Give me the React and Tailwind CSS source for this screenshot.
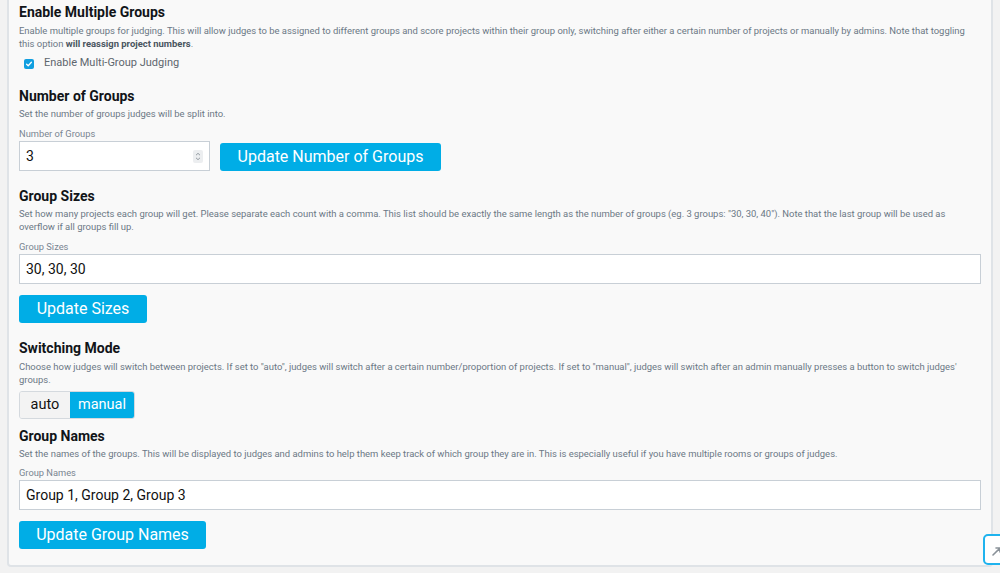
import React from "react";

const font = { fontFamily: "Roboto, 'Open Sans', sans-serif" };

function Heading({ children, className = "" }) {
  return (
    <h2 className={"text-[14px] leading-[18px] font-bold text-[#111418] " + className}>
      {children}
    </h2>
  );
}

function Desc({ children, className = "" }) {
  return (
    <p className={"text-[9.45px] leading-[13px] text-[#6b7885] " + className}>{children}</p>
  );
}

function Label({ children, className = "mt-[7px]" }) {
  return <div className={"text-[9.3px] leading-[13px] text-[#7a8591] " + className}>{children}</div>;
}

function Button({ children, className = "" }) {
  return (
    <button className={"h-[28px] rounded-[3px] bg-[#00ade6] px-[17px] text-[16px] leading-[28px] text-white " + className}>
      {children}
    </button>
  );
}

function TextInput({ value }) {
  return (
    <div className="mt-[1.5px] flex h-[30px] w-full items-center border border-[#c8cfd6] bg-white px-[6px] text-[14px] text-[#111]">
      {value}
    </div>
  );
}

export default function App() {
  return (
    <div className="relative h-[573px] w-full overflow-hidden bg-[#f2f2f2]" style={font}>
      <div className="ml-[7px] w-[986px] rounded-b-[4px] border-x-2 border-b-2 border-[#dfe3e7] bg-[#f9f9f9] pb-[16px] pl-[10px] pr-[10px] pt-[3px]">
        {/* Enable Multiple Groups */}
        <Heading>Enable Multiple Groups</Heading>
        <Desc className="mt-[2.5px]">
          <span className="whitespace-nowrap">Enable multiple groups for judging. This will allow judges to be assigned to different groups and score projects within their group only, switching after either a certain number of projects or manually by admins. Note that toggling</span>
          <br />
          this option <b className="font-bold text-[#4a5560]">will reassign project numbers</b>.
        </Desc>
        <label className="mt-[6px] flex h-[16px] items-center pl-[5px]">
          <span className="flex h-[10px] w-[10px] items-center justify-center rounded-[2px] bg-[#119fe0]">
            <svg width="8" height="8" viewBox="0 0 8 8">
              <path d="M1.6 4.2 L3.2 5.7 L6.4 2.3" fill="none" stroke="white" strokeWidth="1.3" strokeLinecap="round" strokeLinejoin="round" />
            </svg>
          </span>
          <span className="ml-[10px] text-[11px] text-[#5e666e]">Enable Multi-Group Judging</span>
        </label>

        {/* Number of Groups */}
        <Heading className="mt-[15.5px]">Number of Groups</Heading>
        <Desc className="mt-[1.5px]">Set the number of groups judges will be split into.</Desc>
        <Label>Number of Groups</Label>
        <div className="mt-[1.5px] flex items-end gap-[10px]">
          <div className="flex h-[30px] w-[191px] items-center justify-between border border-[#c8cfd6] bg-white pl-[6px] pr-[6px] text-[14px] text-[#111]">
            <span>3</span>
            <span className="flex h-[13px] w-[10px] items-center justify-center rounded-[2px] bg-[#eceef0]">
              <svg width="6" height="9" viewBox="0 0 6 9">
                <path d="M1 3.2 L3 1.3 L5 3.2 M1 5.8 L3 7.7 L5 5.8" fill="none" stroke="#8a9299" strokeWidth="0.9" />
              </svg>
            </span>
          </div>
          <Button className="w-[221px] h-[27px] leading-[27px]">Update Number of Groups</Button>
        </div>

        {/* Group Sizes */}
        <Heading className="mt-[16px]">Group Sizes</Heading>
        <Desc className="mt-[1.5px]">
          <span className="whitespace-nowrap">Set how many projects each group will get. Please separate each count with a comma. This list should be exactly the same length as the number of groups (eg. 3 groups: "30, 30, 40"). Note that the last group will be used as</span>
          <br />
          overflow if all groups fill up.
        </Desc>
        <Label>Group Sizes</Label>
        <TextInput value="30, 30, 30" />
        <Button className="mt-[11px] w-[128px]">Update Sizes</Button>

        {/* Switching Mode */}
        <Heading className="mt-[16px]">Switching Mode</Heading>
        <Desc className="mt-[2.5px]">
          <span className="whitespace-nowrap">Choose how judges will switch between projects. If set to "auto", judges will switch after a certain number/proportion of projects. If set to "manual", judges will switch after an admin manually presses a button to switch judges'</span>
          <br />
          groups.
        </Desc>
        <div className="mt-[5.5px] flex h-[28px] w-[116px] overflow-hidden rounded-[3px] border border-[#d4d9de] text-[14.5px]">
          <span className="flex w-[50px] items-center justify-center bg-[#f3f3f3] text-[#111]">auto</span>
          <span className="flex flex-1 items-center justify-center bg-[#00ade6] text-white">manual</span>
        </div>

        {/* Group Names */}
        <Heading className="mt-[8px]">Group Names</Heading>
        <Desc className="mt-[1.5px]">
          Set the names of the groups. This will be displayed to judges and admins to help them keep track of which group they are in. This is especially useful if you have multiple rooms or groups of judges.
        </Desc>
        <Label className="mt-[6px]">Group Names</Label>
        <TextInput value="Group 1, Group 2, Group 3" />
        <Button className="mt-[11px] w-[187px]">Update Group Names</Button>
      </div>

      {/* scroll-to-top floating button */}
      <button className="absolute left-[983px] top-[534px] h-[31px] w-[40px] rounded-[5px] border-2 border-[#1fb3ee] bg-white">
        <svg className="absolute left-[6px] top-[8px]" width="14" height="14" viewBox="0 0 14 14">
          <path d="M2 11 L9 4 M5 4 L9 4 L9 8" fill="none" stroke="#8a9299" strokeWidth="1.6" strokeLinecap="round" />
        </svg>
      </button>
    </div>
  );
}
